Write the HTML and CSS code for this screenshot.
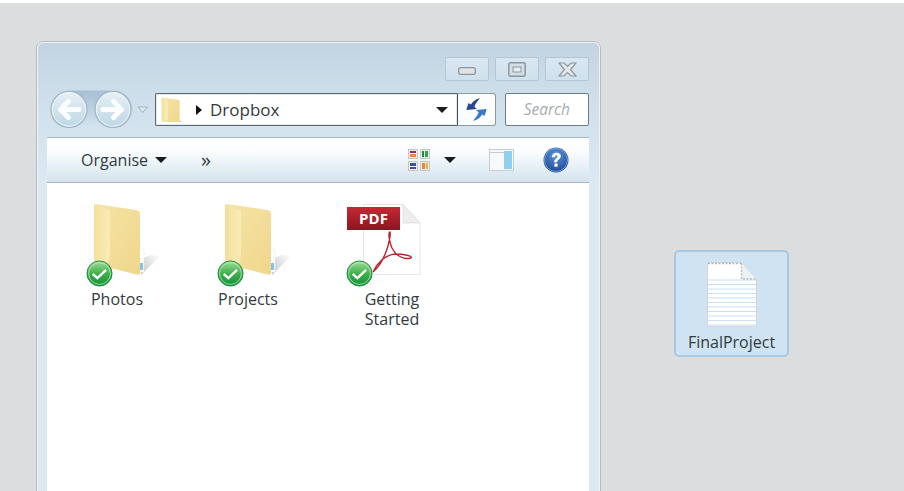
FILE: index.html
```html
<!DOCTYPE html>
<html lang="en">
<head>
<meta charset="utf-8">
<title>Dropbox</title>
<link rel="stylesheet" href="styles.css">
</head>
<body>
<svg class="defs" width="0" height="0" aria-hidden="true">
  <defs>
    <linearGradient id="gBadge" x1="0" y1="0" x2="0" y2="1"><stop offset="0" stop-color="#a2dd9b"/><stop offset=".5" stop-color="#3fb14a"/><stop offset="1" stop-color="#0f9038"/></linearGradient>
    <linearGradient id="gFolderBack" x1="0" y1="0" x2="1" y2="1"><stop offset="0" stop-color="#f5e4a6"/><stop offset="1" stop-color="#f0d68b"/></linearGradient>
    <linearGradient id="gFolderFlap" x1="0" y1="0" x2="1" y2="0"><stop offset="0" stop-color="#f4e09c"/><stop offset="1" stop-color="#f9ecb8"/></linearGradient>
    <linearGradient id="gShadow" x1="0" y1="1" x2="1" y2="0"><stop offset="0" stop-color="#bfc2c4"/><stop offset="1" stop-color="#fff"/></linearGradient>
    <linearGradient id="gRed" x1="0" y1="0" x2="0" y2="1"><stop offset="0" stop-color="#c22a33"/><stop offset="1" stop-color="#8f1420"/></linearGradient>
    <radialGradient id="gHelp" cx=".5" cy=".3" r=".8"><stop offset="0" stop-color="#5b93d8"/><stop offset="1" stop-color="#143f8f"/></radialGradient>
    <linearGradient id="gNav" x1="0" y1="0" x2="0" y2="1"><stop offset="0" stop-color="#e8f1f6"/><stop offset=".55" stop-color="#cfe1ec"/><stop offset="1" stop-color="#bdd7e6"/></linearGradient>
    <linearGradient id="gPill" x1="0" y1="0" x2="0" y2="1"><stop offset="0" stop-color="#a6bfd3"/><stop offset="1" stop-color="#d4e5f0"/></linearGradient>
    <symbol id="badge" viewBox="0 0 28 28">
      <circle cx="14" cy="14" r="13" fill="url(#gBadge)" stroke="#178a3c" stroke-width="1"/>
      <circle cx="14" cy="14" r="11.3" fill="none" stroke="#c6eac3" stroke-width=".8"/>
      <path d="M7 14.500l4.800 4.300 9-8.500" fill="none" stroke="#fff" stroke-width="2.500"/>
    </symbol>
    <symbol id="folder" viewBox="0 0 100 100">
      <path d="M71 84l19-19-9-1-11 4z" fill="url(#gShadow)"/>
      <rect x="69" y="58" width="5" height="23" fill="#fff" stroke="#e5e5e0" stroke-width=".5"/>
      <rect x="70" y="72" width="3" height="7" fill="#7cc4e8"/>
      <path d="M26 13L66 19q4 .5 4 4v59q0 2-3 1.500L40 77 26 72z" fill="url(#gFolderBack)"/>
      <path d="M24 13L40 20V62q0 4-2 9v7L24 73z" fill="url(#gFolderFlap)"/>
    </symbol>
  </defs>
</svg>

<main class="desktop">
  <section class="window">
    <div class="caption">
      <button class="cap-btn" aria-label="Minimise"><svg width="18" height="8" viewBox="0 0 18 8"><rect x=".7" y=".7" width="16.600" height="6.600" rx="2" fill="#dfe3e6" stroke="#8e969c" stroke-width="1.300"/></svg></button>
      <button class="cap-btn" aria-label="Maximise"><svg width="18" height="15" viewBox="0 0 18 15"><rect x=".8" y=".8" width="16.400" height="13.400" rx="2" fill="#d3dfe7" stroke="#8e969c" stroke-width="1.500"/><rect x="5" y="5" width="8" height="5" fill="#e4edf3" stroke="#8e969c"/></svg></button>
      <button class="cap-btn" aria-label="Close"><svg width="19" height="15" viewBox="0 0 19 15"><path d="M1 1h5l3.500 3.500L13 1h5l-5.500 6.500L18 14h-5L9.500 10.500 6 14H1l5.500-6.500z" fill="#e3e8ec" stroke="#8e969c" stroke-width="1.200"/></svg></button>
    </div>

    <div class="address-row">
      <svg class="nav" width="98" height="40" viewBox="0 0 98 40" aria-hidden="true">
        <rect x=".5" y=".5" width="82" height="38" rx="19" fill="url(#gPill)"/>
        <circle cx="19" cy="19.500" r="18" fill="url(#gNav)" stroke="#a3b6c5" stroke-width="1.200"/>
        <circle cx="19" cy="19.500" r="16.600" fill="none" stroke="#eef5f9" stroke-width="1"/>
        <circle cx="63" cy="19.500" r="18" fill="url(#gNav)" stroke="#a3b6c5" stroke-width="1.200"/>
        <circle cx="63" cy="19.500" r="16.600" fill="none" stroke="#eef5f9" stroke-width="1"/>
        <path d="M29 19.500H10.500M18.500 11.500l-8 8 8 8" fill="none" stroke="#fbfdfe" stroke-width="5" stroke-linecap="round" stroke-linejoin="round"/>
        <path d="M53 19.500H71.500M63.500 11.500l8 8-8 8" fill="none" stroke="#fbfdfe" stroke-width="5" stroke-linecap="round" stroke-linejoin="round"/>
        <path d="M88 17h9.500l-4.750 5.500z" fill="#dfeaf1" stroke="#9fb0bd"/>
      </svg>
      <div class="address">
        <svg class="address-folder" width="20" height="25" viewBox="23 12 50 63" aria-hidden="true"><use href="#folder" x="0" y="0" width="100" height="100"/></svg>
        <span class="tri-right"></span>
        <span class="crumb">Dropbox</span>
        <span class="tri-down address-caret"></span>
      </div>
      <button class="refresh" aria-label="Refresh">
        <svg width="21" height="23" viewBox="0 0 21 23">
          <path d="M14 0C9 1.500 6 4 5 6.500L2.500 5 .3 12 11 11 8.300 8.800C9.500 5.500 11.500 3 14 0z" fill="#27468f"/>
          <path d="M14 0C9 1.500 6 4 5 6.500L2.500 5 .3 12 11 11 8.300 8.800C9.500 5.500 11.500 3 14 0z" fill="#3a78cc" transform="rotate(180 10.500 11.500)"/>
        </svg>
      </button>
      <div class="search">Search</div>
    </div>

    <div class="toolbar">
      <span class="tool-label">Organise</span>
      <span class="tri-down organise-caret"></span>
      <span class="chevrons">»</span>
      <span class="spacer"></span>
      <svg class="views" width="22" height="22" viewBox="0 0 22 22" aria-hidden="true">
        <rect x=".5" y=".5" width="9" height="9" fill="#eef0f1" stroke="#c2c6c8"/><rect x="2" y="2" width="6" height="2" fill="#9b2a5e"/><rect x="2" y="5" width="6" height="3" fill="#e58b3a"/>
        <rect x="12.500" y=".5" width="9" height="9" fill="#eef0f1" stroke="#c2c6c8"/><rect x="14" y="2" width="2" height="6" fill="#1f8a3c"/><rect x="17" y="2" width="3" height="6" fill="#2aa34d"/>
        <rect x=".5" y="12.500" width="9" height="9" fill="#eef0f1" stroke="#c2c6c8"/><rect x="2" y="14" width="6" height="3" fill="#2a55b5"/><rect x="2" y="18" width="6" height="2" fill="#6a3aa5"/>
        <rect x="12.500" y="12.500" width="9" height="9" fill="#eef0f1" stroke="#c2c6c8"/><rect x="14" y="14" width="3" height="6" fill="#f0822d"/><rect x="18" y="14" width="2" height="6" fill="#e0b030"/>
      </svg>
      <span class="tri-down views-caret"></span>
      <svg class="pane" width="25" height="22" viewBox="0 0 25 22" aria-hidden="true">
        <rect x=".5" y=".5" width="24" height="21" fill="#f7f9fa" stroke="#c5cdd2"/>
        <rect x="15" y="2" width="8" height="18" fill="#8fd0ee"/>
        <path d="M1 3.500h14" stroke="#c5cdd2"/>
      </svg>
      <svg class="help" width="26" height="26" viewBox="0 0 26 26" aria-hidden="true">
        <circle cx="13" cy="13" r="12.500" fill="url(#gHelp)"/>
        <circle cx="13" cy="13" r="11.500" fill="none" stroke="#8fb5e4" stroke-width=".7"/>
        <path d="M9 10q.5-4 4.200-4 4.300 0 4.300 3.300c0 3-3.500 3-3.500 5.700h-2.500c0-3.500 3.300-3.800 3.300-5.600 0-2-3-1.800-3 .6z" fill="#fff" stroke="#fff" stroke-width=".6"/>
        <rect x="11.400" y="16.500" width="3.200" height="3.200" fill="#fff"/>
      </svg>
    </div>

    <div class="files">
      <figure class="file">
        <div class="file-icon">
          <svg class="file-art" width="100" height="100" viewBox="0 0 100 100" aria-hidden="true"><use href="#folder"/></svg>
          <svg class="file-badge" width="27" height="27" aria-hidden="true"><use href="#badge"/></svg>
        </div>
        <figcaption class="file-name">Photos</figcaption>
      </figure>
      <figure class="file">
        <div class="file-icon">
          <svg class="file-art" width="100" height="100" viewBox="0 0 100 100" aria-hidden="true"><use href="#folder"/></svg>
          <svg class="file-badge" width="27" height="27" aria-hidden="true"><use href="#badge"/></svg>
        </div>
        <figcaption class="file-name">Projects</figcaption>
      </figure>
      <figure class="file file-wide">
        <div class="file-icon">
          <svg class="file-art" width="100" height="100" viewBox="0 0 100 100" aria-hidden="true">
            <path d="M33.500 13.500H73L90 32V83.500H33.500z" fill="#fff" stroke="#e6e6e6"/>
            <path d="M73 13.500V32H90z" fill="#eeeeee" stroke="#d8d8d8" stroke-width=".7"/>
            <path d="M43 81C50 75 55 65 58 55 60 47 61 42 60 41 58 41 59 50 62 57 66 65 74 69 81 67 83 65 74 63 65 63 55 64 47 72 43 81z" fill="none" stroke="#bb2430" stroke-width="1.400"/>
            <rect x="17" y="16" width="53" height="23" fill="url(#gRed)"/>
          </svg>
          <span class="pdf-tag">PDF</span>
          <svg class="file-badge" width="27" height="27" aria-hidden="true"><use href="#badge"/></svg>
        </div>
        <figcaption class="file-name">Getting Started</figcaption>
      </figure>
    </div>
  </section>

  <figure class="tile">
    <svg class="tile-doc" width="50" height="65" viewBox="0 0 50 65" aria-hidden="true">
      <path d="M.5.5H34L49.500 17V64.500H.5z" fill="#fff" stroke="#d2d6da"/>
      <path d="M1 18H49M1 22.500H49M1 27H49M1 31.500H49M1 36H49M1 40.500H49M1 45H49M1 49.500H49M1 54H49M1 58.500H49M1 63H49" stroke="#c9e0f2"/>
      <path d="M1 1.500H34" stroke="#b5b5b5" stroke-width="1.400" stroke-dasharray="2 1.500"/>
      <path d="M34.500 1V17H49" fill="#eef1f3" stroke="#bdbdbd" stroke-width="1.400" stroke-dasharray="2 1.500"/>
    </svg>
    <figcaption class="tile-name">FinalProject</figcaption>
  </figure>
</main>
</body>
</html>
```

FILE: styles.css
```css
* { box-sizing: border-box; }

html, body {
  margin: 0;
  height: 100%;
  background: #fff;
  overflow: hidden;
}

body {
  padding-top: 3px;
  font-family: "Open Sans", "Noto Sans", sans-serif;
  color: #333a40;
}

.defs { position: absolute; }

.desktop {
  display: flex;
  align-items: flex-start;
  height: 488px;
  padding: 38px 0 0 36px;
  background: #dcddde;
  overflow: hidden;
}

.window {
  flex: none;
  display: flex;
  flex-direction: column;
  width: 565px;
  height: 480px;
  padding: 0 10px 0 9px;
  border: 2px solid #f1f2f2;
  border-bottom: 0;
  border-radius: 7px 7px 0 0;
  outline: 1px solid #b9bcbe;
  outline-offset: -1px;
  background: linear-gradient(#c2d4e2 0, #cfe0ec 60px, #dbe9f3 140px);
}

.caption {
  display: flex;
  justify-content: flex-end;
  gap: 6px;
  padding-top: 14px;
}

.cap-btn {
  display: flex;
  align-items: center;
  justify-content: center;
  width: 44px;
  height: 24px;
  padding: 0;
  border: 1px solid #b5c5d1;
  border-radius: 2px;
  background: linear-gradient(#d9e7f1, #cfe1ee);
}

.cap-btn:first-child svg { margin-top: 3px; }

.address-row {
  display: flex;
  align-items: flex-start;
  height: 33px;
  margin-top: 12px;
}

.nav {
  flex: none;
  margin: -3px 0 0 3px;
  width: 98px;
}

.address {
  flex: none;
  display: flex;
  align-items: center;
  width: 302px;
  height: 33px;
  margin-left: 7px;
  border: 1px solid #5d6972;
  border-right: 0;
  border-radius: 2px 0 0 2px;
  background: #fff;
  box-shadow: inset 0 0 0 1px #e3e9ee;
}

.address-folder {
  flex: none;
  margin-left: 5px;
}

.tri-right {
  width: 0;
  height: 0;
  margin-left: 15px;
  border: 5.500px solid transparent;
  border-left: 6px solid #111;
  border-right: 0;
}

.crumb {
  margin-left: 8px;
  font-size: 17px;
}

.tri-down {
  flex: none;
  width: 0;
  height: 0;
  border: 6px solid transparent;
  border-top: 6px solid #1c1c1c;
  border-bottom: 0;
}

.address-caret { margin-left: auto; margin-right: 9px; }

.refresh {
  flex: none;
  display: flex;
  align-items: center;
  justify-content: center;
  width: 39px;
  height: 33px;
  padding: 0;
  border: 1px solid #8b99a3;
  border-left: 1px solid #3f4a52;
  border-radius: 0 3px 3px 0;
  background: #fbfdfe;
}

.search {
  flex: none;
  width: 84px;
  height: 33px;
  margin-left: 9px;
  padding-right: 18px;
  border: 1px solid #6f7b84;
  border-radius: 2px;
  background: #fff;
  color: #a8acaf;
  font-size: 15.500px;
  font-style: italic;
  line-height: 31px;
  text-align: right;
}

.toolbar {
  display: flex;
  align-items: center;
  height: 46px;
  margin-top: 11px;
  padding-left: 34px;
  border-top: 1px solid #a9b4bc;
  border-bottom: 1px solid #a9b4bc;
  background: linear-gradient(#fff 0, #fbfdfe 30%, #d3e3ef 100%);
}

.tool-label { font-size: 16px; }

.organise-caret { margin-left: 7px; }

.chevrons {
  margin-left: 34px;
  font-size: 20px;
  line-height: 20px;
}

.spacer { flex: 1; }

.views { flex: none; }

.views-caret { margin-left: 14px; }

.pane { flex: none; margin-left: 33px; }

.help { flex: none; margin: 0 20px 0 29px; }

.files {
  flex: 1;
  display: flex;
  align-items: flex-start;
  padding: 8px 0 0 23px;
  background: #fff;
}

.file {
  flex: none;
  width: 131px;
  margin: 0;
}

.file-wide { width: 150px; margin-left: -2px; }

.file-icon {
  position: relative;
  width: 100px;
  height: 100px;
}

.file-art { display: block; }

.file-badge {
  position: absolute;
  left: 16px;
  top: 69px;
}

.pdf-tag {
  position: absolute;
  left: 17px;
  top: 16px;
  width: 53px;
  color: #fff;
  font-size: 15px;
  font-weight: 700;
  line-height: 23px;
  text-align: center;
}

.file-name {
  width: 60px;
  margin: -2px 0 0 17px;
  font-size: 16px;
  line-height: 20px;
  text-align: center;
}

.file-wide .file-name {
  width: 70px;
  margin-left: 27px;
}

.tile {
  flex: none;
  display: flex;
  flex-direction: column;
  align-items: center;
  width: 115px;
  height: 107px;
  margin: 209px 0 0 73px;
  padding-top: 10px;
  border: 2px solid #a8c9e4;
  border-radius: 5px;
  background: #cfe3f2;
}

.tile-doc { flex: none; }

.tile-name {
  margin-top: 4px;
  font-size: 16px;
  line-height: 22px;
}
```
